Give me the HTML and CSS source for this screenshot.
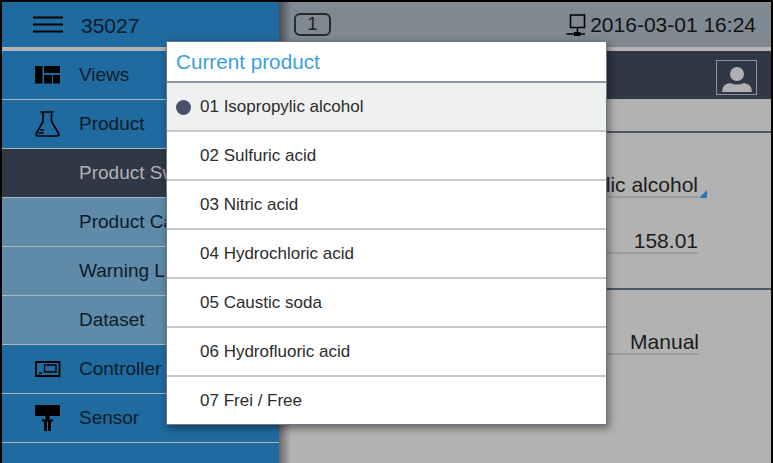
FILE: index.html
```html
<!DOCTYPE html>
<html lang="en">
<head>
<meta charset="utf-8">
<title>Current product</title>
<link rel="stylesheet" href="styles.css">
</head>
<body>
<div class="screen">
  <aside class="sidebar">
    <header class="side-head">
      <svg class="burger" width="30" height="18" viewBox="0 0 30 18"><path d="M0 1.500h30M0 8.500h30M0 15.500h30" stroke="#000" stroke-width="2.200" fill="none"/></svg>
      <span class="device">35027</span>
    </header>
    <nav class="menu">
      <div class="item">
        <svg class="ico" width="26" height="18" viewBox="0 0 26 18"><path d="M0 0h7.500v17.500H0zM9 0h16v7H9zM9 9h8v8.500H9zM18 9h7v8.500h-7z" fill="#000"/></svg>
        <span>Views</span>
      </div>
      <div class="item">
        <svg class="ico" width="26" height="26" viewBox="0 0 26 26"><path d="M5.500 1h13M8 1v9.500L1.300 22.500Q0.600 24.800 3 25H22Q24.400 24.800 23.700 22.500L16.500 10.500V1M5 19h4M3.500 22h5" stroke="#000" stroke-width="1.700" fill="none"/></svg>
        <span>Product</span>
      </div>
      <div class="item sub active"><span>Product Switch</span></div>
      <div class="item sub"><span>Product Calibration</span></div>
      <div class="item sub"><span>Warning Limits</span></div>
      <div class="item sub"><span>Dataset</span></div>
      <div class="item">
        <svg class="ico" width="26" height="16" viewBox="0 0 26 16"><path d="M1 1h23.500v14H1z" stroke="#000" stroke-width="1.800" fill="none"/><path d="M9.500 4h11.500v7H9.500z" stroke="#000" stroke-width="1.300" fill="none"/><path d="M4 12h3" stroke="#000" stroke-width="1.500"/></svg>
        <span>Controller</span>
      </div>
      <div class="item">
        <svg class="ico" width="26" height="26" viewBox="0 0 26 26"><path d="M0 0h25v11H0zM10.500 11h4v4h-4zM7 14.500h11v2H7zM9 16h3v10H9zM13 16h3v10h-3z" fill="#000"/></svg>
        <span>Sensor</span>
      </div>
    </nav>
  </aside>
  <main class="main">
    <header class="status">
      <span class="badge">1</span>
      <div class="clock">
        <svg class="net" width="18" height="23" viewBox="0 0 18 23"><path d="M2.500 2h14v12.500h-14zM9.500 14.500v6M-1.500 21h18.500" stroke="#000" stroke-width="1.600" fill="none"/><path d="M6 19h6.500v4H6z" fill="#000"/></svg>
        <span>2016-03-01 16:24</span>
      </div>
    </header>
    <div class="title-bar">
      <div class="user">
        <svg width="32" height="30" viewBox="0 0 32 30"><circle cx="16" cy="10" r="7" fill="#aeb0b2"/><path d="M1 28q0-8 8-9 7 3 14 0 8 1 8 9z" fill="#aeb0b2"/></svg>
      </div>
    </div>
    <section class="panel">
      <div class="field wide"><span class="value">Isopropylic alcohol</span><i class="corner"></i></div>
      <div class="field num"><span class="value">158.01</span></div>
    </section>
    <section class="panel lower">
      <div class="field mode"><span class="value">Manual</span></div>
    </section>
  </main>
  <div class="dialog">
    <h1 class="dialog-title">Current product</h1>
    <ul class="options">
      <li class="option selected">01 Isopropylic alcohol</li>
      <li class="option">02 Sulfuric acid</li>
      <li class="option">03 Nitric acid</li>
      <li class="option">04 Hydrochloric acid</li>
      <li class="option">05 Caustic soda</li>
      <li class="option">06 Hydrofluoric acid</li>
      <li class="option">07 Frei / Free</li>
    </ul>
  </div>
</div>
</body>
</html>
```
FILE: styles.css
```css
* { box-sizing: border-box; }
html, body { margin: 0; height: 100%; background: #000; }
body { overflow: hidden; font-family: "Liberation Sans", Arial, sans-serif; color: #111; }
.screen { position: relative; display: flex; width: 773px; height: 463px; padding: 2px 2px 0; }

.sidebar { flex: 0 0 277px; background: #1f6a9e; color: #0c1c2b; font-size: 19px; }
.side-head { display: flex; align-items: center; height: 45px; padding-left: 31px; gap: 18px; }
.burger { display: block; }
.device { font-size: 21px; margin-top: 2px; }
.menu { border-top: 4px solid #b4b4b4; }
.item { display: flex; align-items: center; height: 49px; padding-left: 33px; gap: 18px; border-bottom: 1.500px solid #a9b6c0; white-space: nowrap; overflow: hidden; }
.item .ico { flex: 0 0 26px; }
.item.sub { padding-left: 77px; background: #5f8aa8; }
.item.active { background: #303845; color: #b0b2b4; }

.main { flex: 1; display: flex; flex-direction: column; background: #b2b2b2; position: relative; }
.main::before { content: ""; position: absolute; left: 0; top: 0; bottom: 0; width: 12px; background: linear-gradient(90deg, rgba(0,0,0,.42), rgba(0,0,0,0)); pointer-events: none; }
.status { display: flex; align-items: center; justify-content: space-between; height: 45px; padding: 0 15px 0 15px; background: #7f8992; }
.badge { display: block; width: 37px; height: 23px; border: 2px solid #2a2a2a; border-radius: 6px; text-align: center; font-size: 18px; line-height: 19px; color: #222; }
.clock { display: flex; align-items: center; gap: 4px; font-size: 21px; color: #111; }
.clock svg { display: block; overflow: visible; }
.title-bar { display: flex; justify-content: flex-end; align-items: center; height: 52px; padding: 4px 14px 0 0; border-top: 4px solid #b4b4b4; background: #303845; background-clip: padding-box; }
.user { display: flex; align-items: flex-end; justify-content: center; width: 41px; height: 35px; border: 1.500px solid #8f9397; }
.user svg { display: block; }
.panel { height: 157px; border-top: 2px solid #4f5862; padding: 0 73px 0 0; display: flex; flex-direction: column; align-items: flex-end; }
.panel:first-of-type { height: 157px; margin-top: 32px; }
.panel.lower { flex: 1; height: auto; padding-right: 72px; }
.field { position: relative; display: flex; justify-content: flex-end; border-bottom: 2px solid #9c9c9c; font-size: 21px; line-height: 24px; width: 200px; color: #1c1c1c; }
.value { display: block; white-space: nowrap; position: relative; top: 1px; }
.field.wide { margin-top: 39px; }
.field.num { margin-top: 30px; }
.field.mode { margin-top: 39px; }
.corner { position: absolute; right: -9px; bottom: -2px; width: 0; height: 0; border-style: solid; border-width: 0 0 8px 8px; border-color: transparent transparent #1f7ac0 transparent; }

.dialog { position: absolute; left: 166px; top: 41px; width: 441px; height: 384px; background: #fff; border: 1px solid #6d7986; box-shadow: 2px 3px 8px rgba(0,0,0,.45); overflow: hidden; }
.dialog-title { margin: 0; height: 41px; padding-left: 9px; font-size: 20.700px; font-weight: 400; line-height: 40px; color: #3ba0df; border-bottom: 2px solid #8e96a0; }
.options { list-style: none; margin: 0; padding: 0; }
.option { position: relative; height: 49px; padding-left: 33px; font-size: 17px; line-height: 47px; color: #2c2c2c; border-bottom: 2px solid #c8c8c8; }
.option:last-child { border-bottom: 0; }
.option.selected { background: #eff0f0; }
.option.selected::before { content: ""; position: absolute; left: 9px; top: 17px; width: 15px; height: 15px; border-radius: 50%; background: #4a5068; }
```
